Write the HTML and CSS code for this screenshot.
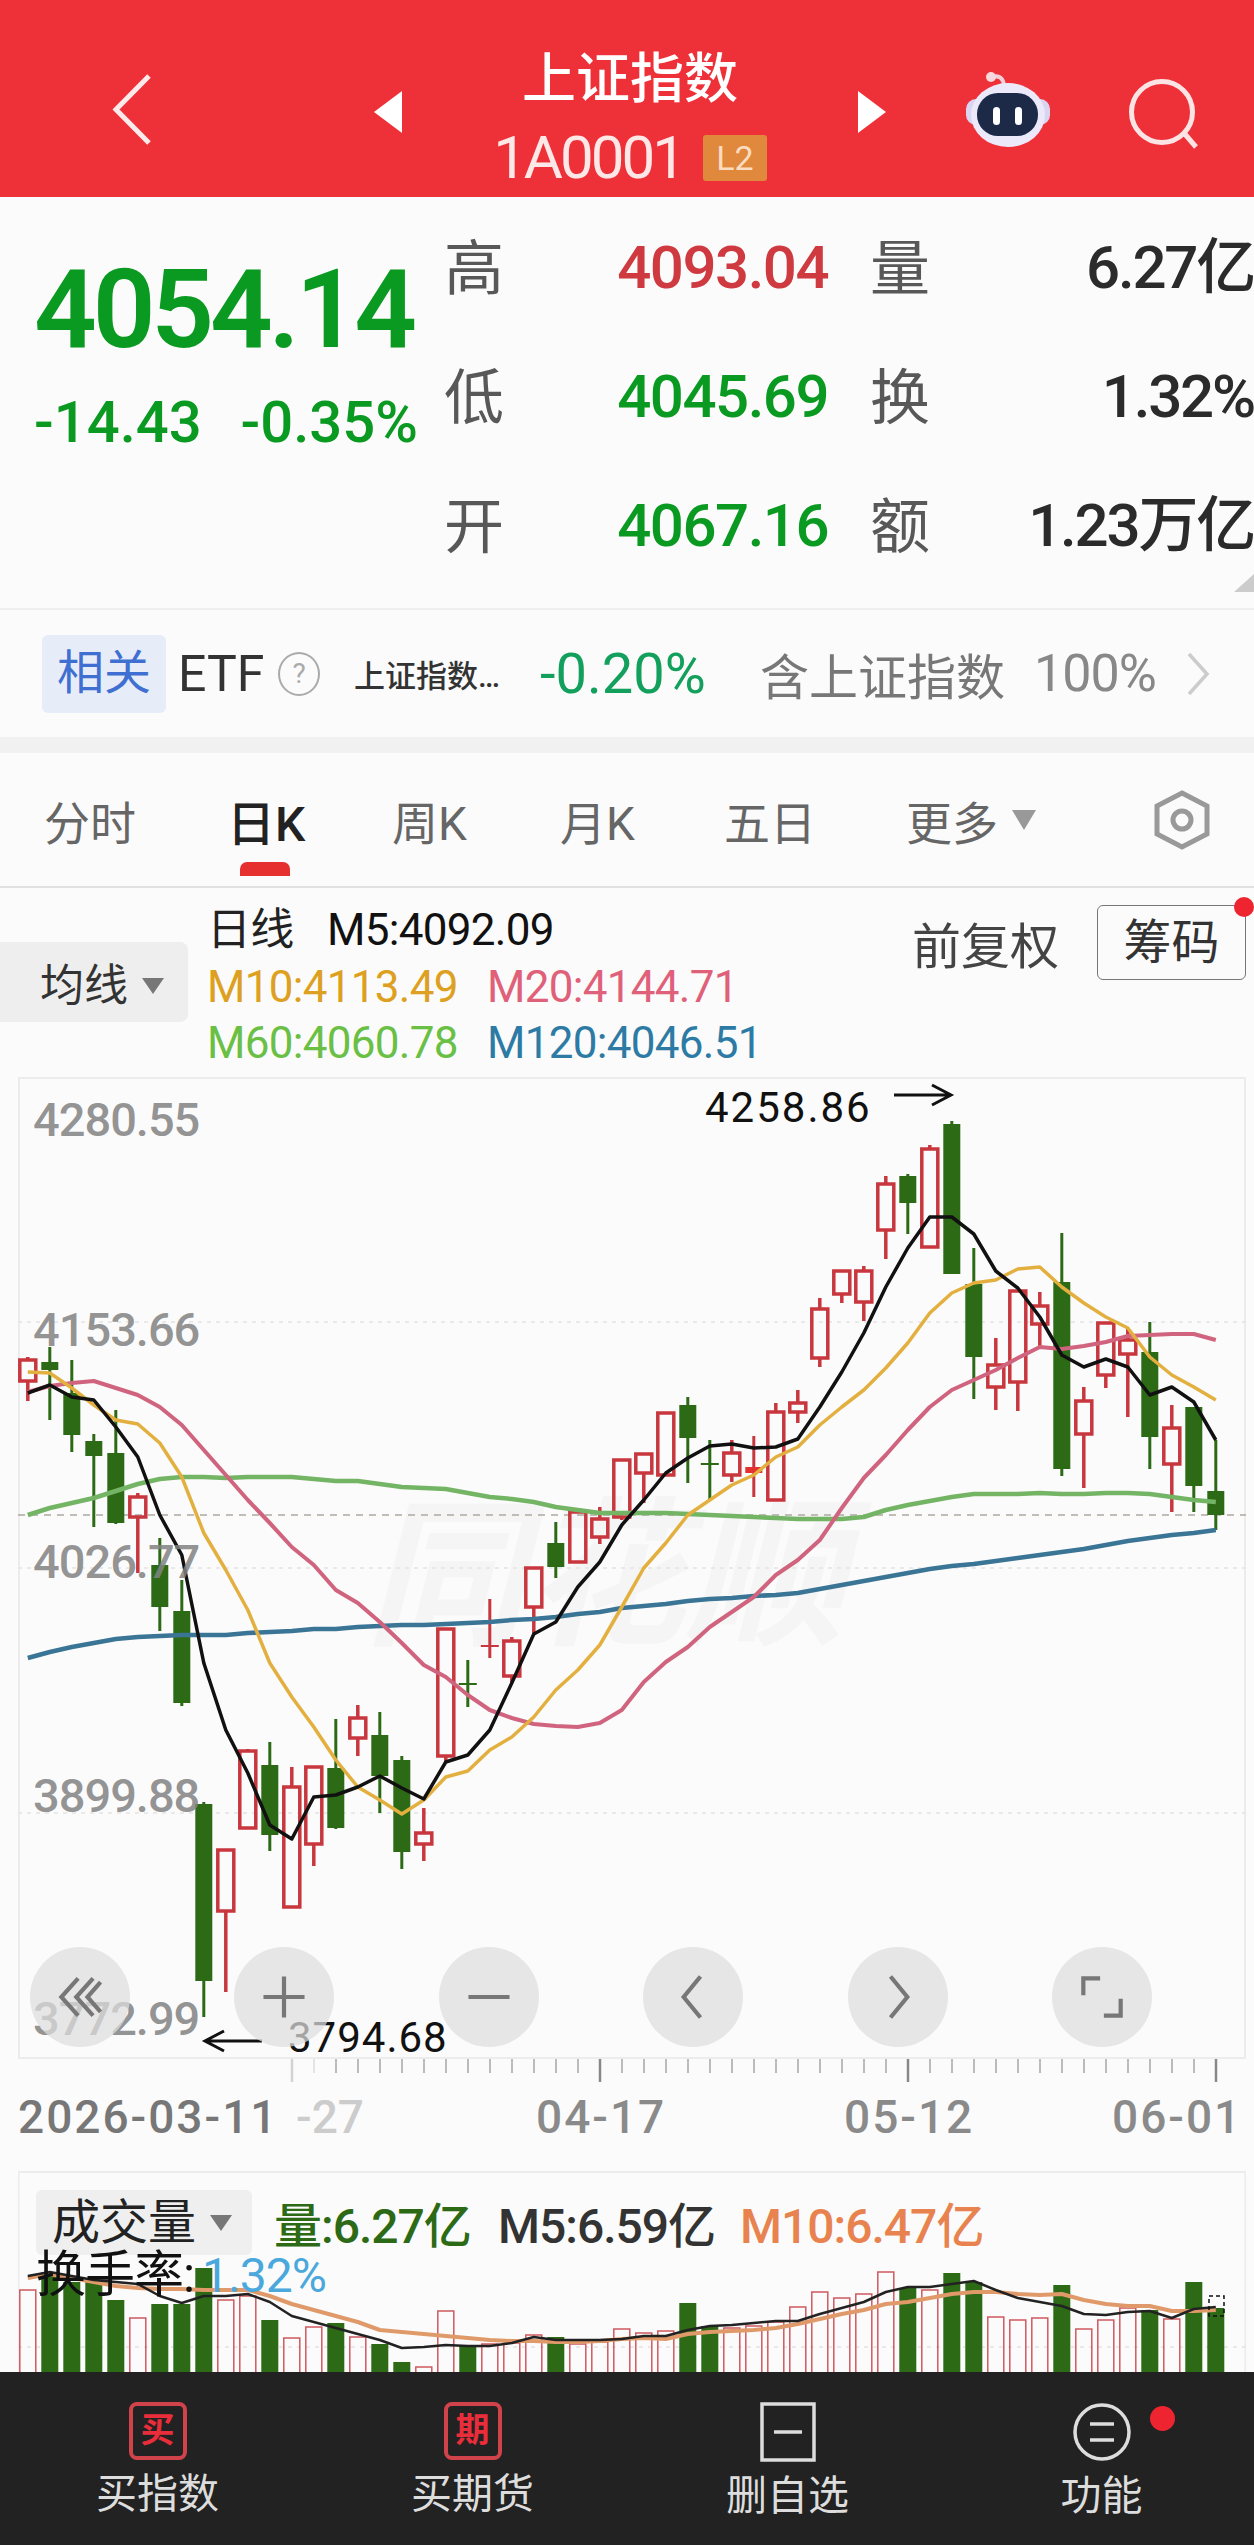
FILE: index.html
```html
<!DOCTYPE html>
<html lang="zh-CN">
<head>
    <meta charset="UTF-8">
    <meta name="viewport" content="width=device-width, initial-scale=1.0">
    <title>上证指数</title>
    <link rel="stylesheet" href="styles.css">
</head>
<body>
    <header class="topbar">
        <svg class="back-icon" viewBox="0 0 40 73"><path d="M37 3 L4 36.5 L37 70"/></svg>
        <div class="title-wrap">
            <span class="tri tri-left"></span>
            <div class="title-text">
                <div class="title-name">上证指数</div>
                <div class="title-code">1A0001<span class="badge">L2</span></div>
            </div>
            <span class="tri tri-right"></span>
        </div>
        <svg class="robot-icon" viewBox="0 0 84 77">
            <path class="robot-ant" d="M27 6 C33 4 37 7 38 14"/>
            <circle cx="25" cy="6" r="5" fill="#f8d8dc"/>
            <rect x="0" y="28" width="84" height="26" rx="10" fill="#d9d5f0"/>
            <ellipse cx="42" cy="44" rx="37" ry="32" fill="#ece9fb"/>
            <rect x="11" y="22" width="61" height="43" rx="21" fill="#1d2a47"/>
            <rect x="27" y="36" width="7" height="18" rx="3.5" fill="#fff"/>
            <rect x="49" y="36" width="7" height="18" rx="3.5" fill="#fff"/>
        </svg>
        <svg class="search-icon" viewBox="0 0 72 72"><circle cx="34" cy="34" r="30.5"/><path d="M56 55 L68 69"/></svg>
    </header>

    <section class="quote">
        <div class="quote-main">
            <div class="price">4054.14</div>
            <div class="change"><span>-14.43</span><span>-0.35%</span></div>
        </div>
        <div class="quote-grid">
            <span class="q-label">高</span><span class="q-val up">4093.04</span><span class="q-label">量</span><span class="q-val2">6.27亿</span>
            <span class="q-label">低</span><span class="q-val down">4045.69</span><span class="q-label">换</span><span class="q-val2">1.32%</span>
            <span class="q-label">开</span><span class="q-val down">4067.16</span><span class="q-label">额</span><span class="q-val2">1.23万亿</span>
        </div>
        <span class="corner"></span>
    </section>

    <section class="related">
        <span class="tag">相关</span>
        <span class="etf">ETF</span>
        <span class="help">?</span>
        <span class="fund">上证指数…</span>
        <span class="fund-pct">-0.20%</span>
        <span class="holds">含上证指数</span>
        <span class="holds-pct">100%</span>
        <svg class="more-icon" viewBox="0 0 24 44"><path d="M3 2 L21 22 L3 42"/></svg>
    </section>

    <div class="band"></div>

    <nav class="tabs">
        <span class="tab">分时</span>
        <span class="tab active">日K</span>
        <span class="tab">周K</span>
        <span class="tab">月K</span>
        <span class="tab">五日</span>
        <span class="tab">更多<i class="arrow-down"></i></span>
        <svg class="gear-icon" viewBox="0 0 56 60"><path d="M28 3 L53 16 V44 L28 57 L3 44 V16 Z"/><circle cx="28" cy="30" r="9"/></svg>
    </nav>

    <section class="legend">
        <div class="ma-select">均线<i class="arrow-down small"></i></div>
        <div class="ma-values">
            <div class="ma-row"><span class="ma-day">日线</span><span class="c-m5">M5:4092.09</span></div>
            <div class="ma-row"><span class="c-m10 ma-col">M10:4113.49</span><span class="c-m20">M20:4144.71</span></div>
            <div class="ma-row"><span class="c-m60 ma-col">M60:4060.78</span><span class="c-m120">M120:4046.51</span></div>
        </div>
        <span class="fq">前复权</span>
        <span class="chip">筹码<i class="dot"></i></span>
    </section>

    <section class="chart">
        <svg id="kline" class="kline" viewBox="18 1077 1228 982"></svg>
        <div class="chart-btns">
            <span class="cbtn"><svg viewBox="0 0 60 60"><path d="M28 10 L10 30 L28 50 M44 10 L26 30 L44 50 M52 14 L38 30 L52 46"/></svg></span>
            <span class="cbtn"><svg viewBox="0 0 60 60"><path d="M30 8 V52 M8 30 H52"/></svg></span>
            <span class="cbtn"><svg viewBox="0 0 60 60"><path d="M8 30 H52"/></svg></span>
            <span class="cbtn"><svg viewBox="0 0 60 60"><path d="M38 8 L20 30 L38 52"/></svg></span>
            <span class="cbtn"><svg viewBox="0 0 60 60"><path d="M22 8 L40 30 L22 52"/></svg></span>
            <span class="cbtn"><svg viewBox="0 0 60 60"><path d="M10 28 V10 H28 M50 32 V50 H32"/></svg></span>
        </div>
    </section>

    <section class="axis">
        <svg id="ticks" class="ticks" viewBox="0 0 1254 24"></svg>
        <div class="dates">
            <span class="date-first">2026-03-11</span>
            <span class="date-fade">-27</span>
            <span>04-17</span>
            <span>05-12</span>
            <span>06-01</span>
        </div>
    </section>

    <section class="volume">
        <svg id="vol" class="vol-svg" viewBox="18 2171 1228 201"></svg>
        <div class="vol-legend">
            <span class="vol-select">成交量<i class="arrow-down small"></i></span>
            <span class="vol-green">量:6.27亿</span>
            <span class="vol-m5">M5:6.59亿</span>
            <span class="vol-m10">M10:6.47亿</span>
        </div>
        <div class="turnover">换手率:<span>1.32%</span></div>
    </section>

    <footer class="bottombar">
        <div class="bar-item">
            <span class="bar-box red">买</span>
            <span class="bar-label">买指数</span>
        </div>
        <div class="bar-item">
            <span class="bar-box red">期</span>
            <span class="bar-label">买期货</span>
        </div>
        <div class="bar-item">
            <svg class="bar-svg" viewBox="0 0 60 60"><rect x="4" y="2" width="52" height="56"/><path d="M16 30 H44"/></svg>
            <span class="bar-label">删自选</span>
        </div>
        <div class="bar-item">
            <svg class="bar-svg" viewBox="0 0 60 60"><circle cx="30" cy="30" r="27"/><path d="M18 22 H42 M18 38 H42"/></svg>
            <span class="bar-label">功能</span>
            <i class="bar-dot"></i>
        </div>
    </footer>

    <script src="chart.js"></script>
</body>
</html>
```

FILE: styles.css
```css
* {
    box-sizing: border-box;
}
body {
    margin: 0;
    width: 1254px;
    height: 2545px;
    overflow: hidden;
    background-color: #fbfbfb;
    color: #333;
    font-family: Roboto, "Noto Sans CJK SC", sans-serif;
}

/* top red bar */
.topbar {
    height: 197px;
    background-color: #ee3038;
    position: relative;
    color: #fff;
}
.back-icon {
    position: absolute;
    left: 112px;
    top: 73px;
    width: 40px;
    height: 73px;
    fill: none;
    stroke: #fdeaea;
    stroke-width: 5;
}
.title-wrap {
    position: absolute;
    left: 374px;
    top: 50px;
    width: 512px;
    display: flex;
    align-items: center;
    justify-content: space-between;
}
.tri {
    width: 0;
    height: 0;
    border-top: 21px solid transparent;
    border-bottom: 21px solid transparent;
    margin-bottom: 12px;
}
.tri-left {
    border-right: 28px solid #fff;
}
.tri-right {
    border-left: 28px solid #fff;
}
.title-text {
    text-align: center;
}
.title-name {
    font-size: 54px;
    font-weight: 500;
    line-height: 60px;
}
.title-code {
    font-size: 60px;
    line-height: 56px;
    margin-top: 20px;
    letter-spacing: -3px;
    display: flex;
    align-items: center;
    color: #fde7e7;
}
.badge {
    width: 64px;
    height: 46px;
    margin-left: 20px;
    background-color: #e0883c;
    border-radius: 3px;
    font-size: 34px;
    line-height: 46px;
    letter-spacing: 0;
    text-align: center;
    color: #fbdcc0;
}
.robot-icon {
    position: absolute;
    left: 966px;
    top: 71px;
    width: 84px;
    height: 77px;
}
.robot-ant {
    fill: none;
    stroke: #f0d0d8;
    stroke-width: 4;
}
.search-icon {
    position: absolute;
    left: 1128px;
    top: 78px;
    width: 72px;
    height: 72px;
    fill: none;
    stroke: #fde4e4;
    stroke-width: 5;
}

/* quote block */
.quote {
    height: 413px;
    display: flex;
    position: relative;
    border-bottom: 2px solid #eeeeee;
}
.quote-main {
    width: 444px;
    flex-shrink: 0;
    padding-left: 34px;
    padding-top: 57px;
    color: #0a9a22;
}
.price {
    font-size: 110px;
    line-height: 112px;
    font-weight: 600;
    letter-spacing: -4.2px;
}
.change {
    margin-top: 26px;
    width: 384px;
    display: flex;
    justify-content: space-between;
    font-size: 58px;
    line-height: 60px;
    font-weight: 500;
    letter-spacing: 0;
}
.quote-grid {
    flex-shrink: 0;
    width: 810px;
    padding-top: 6px;
    display: grid;
    grid-template-columns: 60px 366px 60px 324px;
    grid-auto-rows: 129px;
    align-items: center;
}
.q-label {
    font-size: 60px;
    line-height: 70px;
    color: #585858;
    margin-top: 4px;
}
.q-val {
    font-size: 60px;
    font-weight: 500;
    letter-spacing: -1.5px;
    text-align: right;
    padding-right: 42px;
}
.q-val2 {
    font-size: 60px;
    line-height: 70px;
    font-weight: 500;
    letter-spacing: -2.2px;
    text-align: right;
    color: #2b2b2b;
}
.up {
    color: #cf3a40;
}
.down {
    color: #0a9a22;
}
.corner {
    position: absolute;
    right: 0;
    bottom: 16px;
    border-bottom: 18px solid #cccccc;
    border-left: 20px solid transparent;
}

/* related etf */
.related {
    height: 127px;
    display: flex;
    align-items: center;
    padding-left: 42px;
}
.tag {
    width: 124px;
    height: 78px;
    background-color: #e6edf8;
    border-radius: 6px;
    color: #3f6fd0;
    font-size: 47px;
    line-height: 76px;
    text-align: center;
}
.etf {
    margin-left: 12px;
    font-size: 50px;
    color: #333;
    width: 86px;
}
.help {
    width: 42px;
    height: 44px;
    border: 2px solid #aaaaaa;
    border-radius: 50%;
    color: #aaaaaa;
    font-size: 28px;
    line-height: 40px;
    text-align: center;
    margin-left: 14px;
}
.fund {
    margin-left: 34px;
    width: 186px;
    font-size: 31px;
    font-weight: 500;
    color: #333;
}
.fund-pct {
    font-size: 56px;
    color: #12a05c;
    width: 220px;
}
.holds {
    font-size: 49px;
    color: #777;
    width: 274px;
}
.holds-pct {
    font-size: 52px;
    color: #888;
    letter-spacing: -1px;
}
.more-icon {
    margin-left: 30px;
    width: 24px;
    height: 44px;
    fill: none;
    stroke: #cccccc;
    stroke-width: 3.5;
}
.band {
    height: 16px;
    background-color: #f1f1f1;
}

/* period tabs */
.tabs {
    height: 135px;
    display: grid;
    grid-template-columns: 183px 165px 168px 164px 182px 248px auto;
    align-items: center;
    padding-left: 44px;
    border-bottom: 2px solid #e0e0e0;
}
.tab {
    font-size: 46px;
    color: #666;
    position: relative;
    display: flex;
    align-items: center;
}
.tab.active {
    color: #222;
    font-weight: 500;
    font-size: 48px;
}
.tab.active::after {
    content: "";
    position: absolute;
    left: 13px;
    top: 77px;
    width: 50px;
    height: 14px;
    background-color: #e5302f;
    border-radius: 7px 7px 0 0;
}
.arrow-down {
    display: inline-block;
    margin-left: 14px;
    border-left: 12px solid transparent;
    border-right: 12px solid transparent;
    border-top: 20px solid #999999;
}
.arrow-down.small {
    margin-left: 14px;
    border-left-width: 11px;
    border-right-width: 11px;
    border-top-width: 16px;
    border-top-color: #777;
}
.gear-icon {
    width: 56px;
    height: 60px;
    fill: none;
    stroke: #999999;
    stroke-width: 5;
}

/* moving average legend */
.legend {
    height: 189px;
    display: flex;
    align-items: flex-start;
}
.ma-select {
    width: 188px;
    height: 80px;
    margin-top: 54px;
    padding: 8px 0 0 40px;
    background-color: #eeeeee;
    border-radius: 0 8px 8px 0;
    font-size: 44px;
    line-height: 70px;
    color: #333;
    display: flex;
    align-items: center;
}
.ma-values {
    margin-left: 19px;
    padding-top: 14px;
    font-size: 44px;
    letter-spacing: -0.7px;
    width: 705px;
}
.ma-row {
    height: 56.5px;
    line-height: 56.5px;
    display: flex;
    white-space: nowrap;
}
.ma-day {
    width: 120px;
    color: #222;
}
.ma-col {
    width: 280px;
}
.c-m5 {
    color: #111;
}
.c-m10 {
    color: #dda020;
}
.c-m20 {
    color: #e0607a;
}
.c-m60 {
    color: #6abf45;
}
.c-m120 {
    color: #2d7ba5;
}
.fq {
    font-size: 49px;
    color: #444;
    margin-top: 19px;
    width: 182px;
}
.chip {
    position: relative;
    width: 149px;
    height: 75px;
    margin-top: 17px;
    margin-left: 3px;
    border: 1px solid #777;
    border-radius: 6px;
    font-size: 48px;
    line-height: 74px;
    text-align: center;
    color: #333;
}
.dot {
    position: absolute;
    right: -9px;
    top: -9px;
    width: 20px;
    height: 20px;
    border-radius: 50%;
    background-color: #ee2530;
}

/* kline chart */
.chart {
    position: relative;
    height: 982px;
    margin-left: 18px;
    width: 1228px;
    border: 2px solid #ececec;
}
.kline {
    position: absolute;
    left: -2px;
    top: -2px;
    width: 1228px;
    height: 982px;
    overflow: visible;
}
.kline text {
    font-family: Roboto, "Noto Sans CJK SC", sans-serif;
}
.chart-btns {
    position: absolute;
    left: 10px;
    top: 868px;
    width: 1122px;
    display: flex;
    justify-content: space-between;
}
.cbtn {
    width: 100px;
    height: 100px;
    border-radius: 50%;
    background-color: rgba(222, 222, 222, 0.72);
    display: flex;
    align-items: center;
    justify-content: center;
}
.cbtn svg {
    width: 56px;
    height: 56px;
    fill: none;
    stroke: #777;
    stroke-width: 4.5;
}

/* time axis */
.axis {
    height: 112px;
}
.ticks {
    display: block;
    width: 1254px;
    height: 24px;
}
.dates {
    display: grid;
    grid-template-columns: 278px 240px 308px 268px auto;
    padding-left: 18px;
    margin-top: 6px;
    font-size: 46px;
    line-height: 56px;
    font-weight: 500;
    color: #8a8a8a;
    letter-spacing: 2px;
    white-space: nowrap;
}
.date-first {
    color: #777;
}
.date-fade {
    color: #cccccc;
    letter-spacing: 0;
}

/* volume */
.volume {
    position: relative;
    height: 201px;
    overflow: hidden;
}
.vol-svg {
    position: absolute;
    left: 18px;
    top: 0;
    width: 1228px;
    height: 201px;
}
.vol-legend {
    position: absolute;
    left: 36px;
    top: 16px;
    display: flex;
    align-items: center;
    font-size: 48px;
    font-weight: 500;
    letter-spacing: -1px;
    white-space: nowrap;
}
.vol-select {
    width: 216px;
    height: 65px;
    padding: 1px 0 0 16px;
    margin-right: 22px;
    background-color: #efefef;
    border-radius: 6px;
    font-size: 48px;
    font-weight: 400;
    line-height: 60px;
    letter-spacing: 0;
    color: #222;
    display: flex;
    align-items: center;
}
.vol-green {
    color: #2c6a16;
    width: 224px;
}
.vol-m5 {
    color: #333;
    width: 242px;
}
.vol-m10 {
    color: #e8834f;
}
.turnover {
    position: absolute;
    left: 36px;
    top: 82px;
    font-size: 50px;
    line-height: 44px;
    color: #111;
    letter-spacing: -1px;
    white-space: nowrap;
}
.turnover span {
    color: #4aa8dc;
    margin-left: 8px;
    font-size: 48px;
}

/* bottom bar */
.bottombar {
    height: 173px;
    background-color: #222222;
    display: grid;
    grid-template-columns: 315px 315px 315px 313px;
    color: #dddddd;
}
.bar-item {
    position: relative;
    display: flex;
    flex-direction: column;
    align-items: center;
    padding-top: 30px;
}
.bar-box {
    width: 58px;
    height: 58px;
    border: 4px solid #d0434a;
    border-radius: 8px;
    color: #ea2d3a;
    font-size: 34px;
    font-weight: 700;
    line-height: 48px;
    text-align: center;
}
.bar-svg {
    width: 60px;
    height: 60px;
    fill: none;
    stroke: #dddddd;
    stroke-width: 3.5;
}
.bar-label {
    margin-top: 6px;
    font-size: 41px;
    line-height: 56px;
}
.bar-dot {
    position: absolute;
    left: 205px;
    top: 34px;
    width: 25px;
    height: 25px;
    border-radius: 50%;
    background-color: #ee2530;
}
```

FILE: chart.js
```js
const SVG_NS = 'http://www.w3.org/2000/svg';
const RED = '#c8363e';
const GREEN = '#2c6a16';

// [high, top of body, bottom of body, low] in page pixels
const candles = [
    ['r', 1357, 1360, 1381, 1401], ['g', 1347, 1362, 1370, 1420], ['g', 1360, 1393, 1435, 1452],
    ['g', 1434, 1441, 1456, 1527], ['g', 1410, 1453, 1523, 1524], ['r', 1493, 1497, 1517, 1573],
    ['g', 1538, 1565, 1607, 1631], ['g', 1580, 1611, 1703, 1706], ['g', 1802, 1804, 1981, 2017],
    ['r', 1850, 1850, 1911, 1992], ['r', 1749, 1751, 1828, 1828], ['g', 1742, 1765, 1835, 1851],
    ['r', 1767, 1787, 1907, 1907], ['r', 1766, 1767, 1844, 1866], ['g', 1719, 1768, 1828, 1829],
    ['r', 1705, 1718, 1738, 1756], ['g', 1712, 1735, 1776, 1813], ['g', 1756, 1760, 1852, 1869],
    ['r', 1808, 1833, 1844, 1861], ['r', 1629, 1629, 1756, 1762], ['g', 1660, 1684, 1685, 1707],
    ['f', 1599, 1646, 1648, 1658], ['r', 1637, 1641, 1676, 1683], ['r', 1568, 1568, 1607, 1633],
    ['g', 1522, 1543, 1567, 1578], ['r', 1512, 1512, 1562, 1563], ['r', 1507, 1519, 1537, 1544],
    ['r', 1460, 1460, 1517, 1520], ['r', 1453, 1454, 1473, 1503], ['r', 1413, 1413, 1475, 1475],
    ['g', 1397, 1405, 1438, 1483], ['g', 1440, 1464, 1465, 1500], ['r', 1440, 1453, 1475, 1482],
    ['f', 1436, 1467, 1473, 1497], ['r', 1403, 1412, 1500, 1500], ['r', 1390, 1403, 1412, 1423],
    ['r', 1298, 1309, 1358, 1367], ['r', 1271, 1271, 1294, 1303], ['r', 1266, 1271, 1302, 1321],
    ['r', 1176, 1184, 1230, 1259], ['g', 1174, 1176, 1203, 1234], ['r', 1145, 1149, 1247, 1247],
    ['g', 1121, 1124, 1274, 1274], ['g', 1248, 1284, 1357, 1399], ['r', 1338, 1365, 1387, 1410],
    ['r', 1291, 1291, 1382, 1411], ['r', 1292, 1306, 1324, 1347], ['g', 1233, 1282, 1469, 1476],
    ['r', 1387, 1401, 1434, 1488], ['r', 1323, 1323, 1375, 1388], ['r', 1329, 1340, 1354, 1417],
    ['g', 1322, 1352, 1437, 1469], ['r', 1405, 1428, 1464, 1512], ['g', 1407, 1407, 1486, 1512],
    ['g', 1440, 1491, 1515, 1530]
];

// moving averages, one point per candle
const m5 = [1393, 1385, 1397, 1400, 1427, 1457, 1515, 1555, 1663, 1730, 1773, 1825, 1839, 1797, 1795, 1787, 1776, 1788, 1799,
    1762, 1755, 1730, 1683, 1634, 1622, 1587, 1562, 1525, 1500, 1473, 1458, 1446, 1444, 1448, 1447, 1439, 1407, 1372, 1333,
    1287, 1248, 1217, 1217, 1234, 1271, 1288, 1317, 1355, 1367, 1359, 1367, 1395, 1387, 1402, 1440];
const m10 = [1372, 1373, 1388, 1405, 1420, 1424, 1443, 1477, 1533, 1570, 1610, 1663, 1697, 1727, 1760, 1787, 1800, 1814, 1800,
    1777, 1771, 1750, 1737, 1717, 1690, 1670, 1645, 1607, 1568, 1543, 1515, 1500, 1485, 1475, 1457, 1447, 1425, 1407, 1390,
    1368, 1343, 1313, 1293, 1283, 1280, 1269, 1267, 1287, 1303, 1317, 1328, 1357, 1375, 1387, 1400];
const m20 = [1392, 1386, 1383, 1381, 1388, 1395, 1407, 1425, 1450, 1475, 1500, 1523, 1547, 1565, 1590, 1603, 1622, 1643, 1665,
    1677, 1695, 1710, 1718, 1724, 1726, 1727, 1723, 1710, 1682, 1662, 1647, 1627, 1612, 1597, 1575, 1560, 1540, 1508, 1478,
    1455, 1430, 1407, 1390, 1380, 1370, 1358, 1347, 1349, 1346, 1342, 1336, 1335, 1334, 1334, 1340];
const m60 = [1515, 1508, 1503, 1498, 1491, 1484, 1479, 1477, 1477, 1478, 1477, 1477, 1477, 1479, 1481, 1481, 1484, 1487, 1488,
    1489, 1493, 1497, 1499, 1502, 1507, 1510, 1513, 1513, 1513, 1513, 1514, 1515, 1516, 1517, 1518, 1519, 1519, 1519, 1517,
    1510, 1505, 1501, 1497, 1494, 1494, 1494, 1493, 1494, 1494, 1493, 1493, 1494, 1497, 1500, 1502];
const m120 = [1658, 1652, 1647, 1643, 1639, 1637, 1636, 1635, 1635, 1635, 1633, 1632, 1631, 1629, 1629, 1627, 1626, 1625, 1625,
    1624, 1623, 1622, 1620, 1619, 1617, 1614, 1612, 1608, 1606, 1604, 1601, 1599, 1598, 1596, 1595, 1593, 1589, 1585, 1581,
    1577, 1573, 1569, 1566, 1564, 1561, 1558, 1555, 1552, 1549, 1545, 1541, 1538, 1535, 1533, 1530];

// volume: [type, top of bar] in page pixels
const volBars = 'r2290 g2272 g2282 g2282 g2300 r2318 g2304 g2304 g2268 r2300 r2296 g2320 r2338 r2327 g2323 r2337 g2344 g2362 r2367 r2311 g2346 r2344 r2343 r2335 g2337 r2344 r2342 r2329 r2333 r2331 g2303 g2326 r2328 r2326 r2322 r2307 r2292 r2298 r2294 r2272 g2288 r2290 g2273 g2282 r2317 r2320 r2318 g2285 r2329 r2320 r2308 g2310 r2319 g2282 g2308'.split(' ');
const volM5 = [2276, 2272, 2276, 2280, 2282, 2284, 2296, 2303, 2296, 2296, 2294, 2302, 2316, 2322, 2328, 2334, 2340, 2348, 2347, 2345, 2346, 2346,
    2343, 2337, 2340, 2340, 2340, 2339, 2336, 2336, 2330, 2326, 2325, 2323, 2321, 2321, 2314, 2308, 2302, 2292, 2287, 2287, 2284, 2281, 2290, 2298,
    2302, 2306, 2314, 2315, 2312, 2311, 2318, 2309, 2307];
const volM10 = [2278, 2274, 2278, 2282, 2286, 2288, 2289, 2289, 2290, 2290, 2290, 2296, 2304, 2310, 2316, 2322, 2330, 2332, 2334, 2336, 2338, 2340,
    2341, 2341, 2342, 2342, 2341, 2339, 2338, 2339, 2334, 2332, 2331, 2330, 2328, 2324, 2319, 2314, 2310, 2304, 2302, 2298, 2294, 2292, 2292, 2294,
    2295, 2294, 2300, 2304, 2306, 2306, 2311, 2311, 2310];

function el(parent, name, attrs, text) {
    const node = document.createElementNS(SVG_NS, name);
    for (const key in attrs) {
        node.setAttribute(key, attrs[key]);
    }
    if (text) {
        node.textContent = text;
    }
    parent.appendChild(node);
    return node;
}

function xAt(i) {
    return 27.8 + 22 * i;
}

function drawLine(svg, ys, color, width) {
    const points = ys.map((y, i) => xAt(i) + ',' + y).join(' ');
    el(svg, 'polyline', { points, fill: 'none', stroke: color, 'stroke-width': width, 'stroke-linejoin': 'round' });
}

function drawKline() {
    const svg = document.getElementById('kline');

    el(svg, 'text', { x: 365, y: 1632, 'font-size': 160, 'font-weight': 700, 'font-style': 'italic', fill: '#f5f5f5' }, '同花顺');

    for (const y of [1322, 1568, 1813]) {
        el(svg, 'line', { x1: 18, x2: 1246, y1: y, y2: y, stroke: '#e4e4e4', 'stroke-width': 1.5, 'stroke-dasharray': '4 5' });
    }
    el(svg, 'line', { x1: 18, x2: 1246, y1: 1515, y2: 1515, stroke: '#b0a8a0', 'stroke-width': 1.5, 'stroke-dasharray': '7 6' });

    candles.forEach((c, i) => {
        const x = xAt(i);
        const color = c[0] === 'g' ? GREEN : RED;
        if (c[0] === 'r') {
            el(svg, 'line', { x1: x, x2: x, y1: c[1], y2: c[2], stroke: color, 'stroke-width': 3.5 });
            el(svg, 'line', { x1: x, x2: x, y1: c[3], y2: c[4], stroke: color, 'stroke-width': 3.5 });
            el(svg, 'rect', { x: x - 8, y: c[2], width: 16, height: c[3] - c[2], fill: 'none', stroke: color, 'stroke-width': 3.5 });
        } else {
            el(svg, 'line', { x1: x, x2: x, y1: c[1], y2: c[4], stroke: color, 'stroke-width': 3 });
            if (c[3] - c[2] < 3) {
                el(svg, 'line', { x1: x - 9, x2: x + 9, y1: c[2], y2: c[2], stroke: color, 'stroke-width': 2 });
            } else {
                el(svg, 'rect', { x: x - 8.5, y: c[2], width: 17, height: c[3] - c[2], fill: c[0] === 'f' ? '#e53030' : color });
            }
        }
    });

    drawLine(svg, m120, '#3a7596', 4.5);
    drawLine(svg, m60, '#74b565', 4.5);
    drawLine(svg, m20, '#d0647f', 4);
    drawLine(svg, m10, '#e3b040', 3.5);
    drawLine(svg, m5, '#111111', 3.5);

    const labels = [['4280.55', 1136], ['4153.66', 1346], ['4026.77', 1578], ['3899.88', 1812], ['3772.99', 2035]];
    for (const l of labels) {
        el(svg, 'text', { x: 33, y: l[1], 'font-size': 47, 'font-weight': 500, fill: 'rgba(130,130,130,0.85)', 'letter-spacing': -1 }, l[0]);
    }

    el(svg, 'text', { x: 705, y: 1122, 'font-size': 42, fill: '#111', 'letter-spacing': 2 }, '4258.86');
    el(svg, 'path', { d: 'M894 1095 H950 M932 1085 L951 1095 L932 1105', fill: 'none', stroke: '#111', 'stroke-width': 3 });
    el(svg, 'text', { x: 288, y: 2052, 'font-size': 42, fill: '#111', 'letter-spacing': 1 }, '3794.68');
    el(svg, 'path', { d: 'M262 2041 H206 M224 2031 L205 2041 L224 2051', fill: 'none', stroke: '#111', 'stroke-width': 3 });
}

function drawTicks() {
    const svg = document.getElementById('ticks');
    for (let x = 292; x <= 1216; x += 22) {
        const major = (1216 - x) % 308 === 0;
        const fade = x < 320 ? 0.35 : 1;
        el(svg, 'line', { x1: x, x2: x, y1: 0, y2: major ? 23 : 14, stroke: major ? '#888' : '#bbb', 'stroke-width': major ? 2.5 : 2, opacity: fade });
    }
}

function drawVolume() {
    const svg = document.getElementById('vol');
    el(svg, 'line', { x1: 18, x2: 1246, y1: 2171, y2: 2171, stroke: '#ececec', 'stroke-width': 4 });
    el(svg, 'line', { x1: 18, x2: 18, y1: 2171, y2: 2372, stroke: '#ececec', 'stroke-width': 3 });
    el(svg, 'line', { x1: 1246, x2: 1246, y1: 2171, y2: 2372, stroke: '#ececec', 'stroke-width': 3 });
    el(svg, 'line', { x1: 18, x2: 1246, y1: 2347, y2: 2347, stroke: '#e4e4e4', 'stroke-width': 1.5, 'stroke-dasharray': '4 5' });

    volBars.forEach((bar, i) => {
        const x = xAt(i);
        const top = parseInt(bar.slice(1));
        if (bar[0] === 'g') {
            el(svg, 'rect', { x: x - 8.5, y: top, width: 17, height: 2372 - top, fill: GREEN });
        } else {
            el(svg, 'rect', { x: x - 8, y: top, width: 16, height: 2380 - top, fill: 'none', stroke: '#cf5a60', 'stroke-width': 1.5 });
        }
    });

    drawLine(svg, volM10, '#e09a6a', 4);
    drawLine(svg, volM5, '#222222', 2.5);
    el(svg, 'rect', { x: 1209, y: 2296, width: 15, height: 20, fill: 'none', stroke: '#111', 'stroke-width': 1.5, 'stroke-dasharray': '4 3' });
}

drawKline();
drawTicks();
drawVolume();
```
